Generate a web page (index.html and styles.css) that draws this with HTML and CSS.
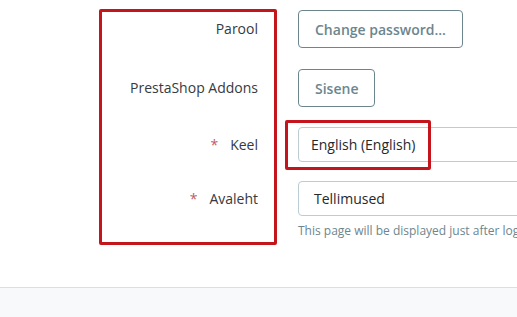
FILE: index.html
```html
<!DOCTYPE html>
<html lang="et">
<head>
    <meta charset="UTF-8">
    <meta name="viewport" content="width=device-width, initial-scale=1.0">
    <title>Employee options</title>
    <link rel="stylesheet" href="styles.css">
</head>
<body>
    <div class="panel">
        <!-- Form rows -->
        <div class="form">
            <div class="form-row">
                <label class="form-label">Parool</label>
                <div class="form-control">
                    <button class="btn-outline">Change password...</button>
                </div>
            </div>

            <div class="form-row row-addons">
                <label class="form-label">PrestaShop Addons</label>
                <div class="form-control">
                    <button class="btn-outline">Sisene</button>
                </div>
            </div>

            <div class="form-row row-select">
                <label class="form-label"><span class="required">*</span>Keel</label>
                <div class="form-control">
                    <div class="select">English (English)</div>
                </div>
            </div>

            <div class="form-row row-input">
                <label class="form-label"><span class="required">*</span>Avaleht</label>
                <div class="form-control">
                    <div class="input">Tellimused</div>
                    <p class="help">This page will be displayed just after login.</p>
                </div>
            </div>
        </div>

        <!-- Annotation boxes -->
        <div class="mark mark-labels"></div>
        <div class="mark mark-lang"></div>
    </div>

    <div class="panel-footer"></div>
</body>
</html>
```

FILE: styles.css
```css
/* Page */
body {
    margin: 0;
    font-family: 'Open Sans', sans-serif;
    font-size: 14px;
    color: #363a41;
    background: #fff;
    overflow: hidden;
}

.panel {
    position: relative;
    height: 287px;
    background: #fff;
    border-bottom: 1px solid #dcdfe1;
    overflow: hidden;
}

.form {
    padding-top: 10px;
}

.form-row {
    display: flex;
    align-items: flex-start;
    margin-bottom: 21px;
}

.row-addons {
    margin-bottom: 20px;
}

.row-select {
    margin-bottom: 19px;
}

.form-label {
    width: 258px;
    flex-shrink: 0;
    text-align: right;
    line-height: 38px;
}

.row-select .form-label,
.row-input .form-label {
    line-height: 35px;
}

.required {
    color: #c05c67;
    margin-right: 12px;
}

.form-control {
    margin-left: 40px;
    white-space: nowrap;
}

.btn-outline {
    display: block;
    height: 38px;
    padding: 0 16px;
    font-family: 'Open Sans', sans-serif;
    font-size: 14px;
    font-weight: 600;
    color: #6c868e;
    background: #fff;
    border: 1px solid #6c868e;
    border-radius: 4px;
}

.select, .input {
    box-sizing: border-box;
    width: 400px;
    height: 35px;
    line-height: 33px;
    border: 1px solid #bbcdd2;
    border-radius: 4px;
    color: #25292e;
}

.select {
    padding-left: 12px;
}

.input {
    padding-left: 15px;
}

.help {
    margin: 6px 0 0;
    font-size: 12px;
    color: #6c868e;
}

/* Red annotation boxes */
.mark {
    position: absolute;
    border: 3px solid #c4141c;
    border-radius: 2px;
}

.mark-labels {
    left: 99px;
    top: 9px;
    width: 172px;
    height: 230px;
}

.mark-lang {
    left: 285px;
    top: 120px;
    width: 140px;
    height: 44px;
}

.panel-footer {
    height: 40px;
    background: #f8f9fa;
}
```
